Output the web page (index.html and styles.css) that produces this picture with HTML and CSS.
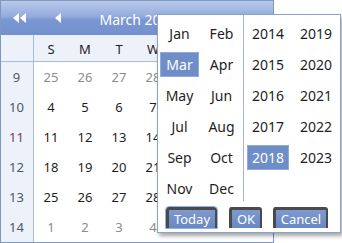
FILE: index.html
```html
<!DOCTYPE html>
<html lang="en">
<head>
  <meta charset="UTF-8">
  <title>Calendar</title>
  <link rel="stylesheet" href="styles.css">
</head>
<body>
  <div class="calendar">
    <div class="cal-header">
      <span class="nav nav-fast">
        <svg width="13" height="10" viewBox="0 0 13 10"><path d="M6 0L0 5l6 5z M13 0L7 5l6 5z" fill="#fff"/></svg>
      </span>
      <span class="nav nav-prev">
        <svg width="6" height="10" viewBox="0 0 6 10"><path d="M6 0L0 5l6 5z" fill="#fff"/></svg>
      </span>
      <span class="cal-title">March 2018</span>
    </div>
    <div class="cal-grid" id="cal-grid"></div>

    <div class="picker">
      <div class="picker-body">
        <div class="months" id="months"></div>
        <div class="years" id="years"></div>
      </div>
      <div class="picker-buttons">
        <button class="btn btn-focus">Today</button>
        <button class="btn btn-ok">OK</button>
        <button class="btn btn-cancel">Cancel</button>
      </div>
    </div>
  </div>

  <script>
    document.addEventListener('DOMContentLoaded', function() {
      const grid = document.getElementById('cal-grid');
      const days = ['S', 'M', 'T', 'W', 'T', 'F', 'S'];
      const weeks = [
        { num: 9, days: [25, 26, 27, 28, 1, 2, 3], otherUntil: 4 },
        { num: 10, days: [4, 5, 6, 7, 8, 9, 10] },
        { num: 11, days: [11, 12, 13, 14, 15, 16, 17], current: true },
        { num: 12, days: [18, 19, 20, 21, 22, 23, 24] },
        { num: 13, days: [25, 26, 27, 28, 29, 30, 31] },
        { num: 14, days: [1, 2, 3, 4, 5, 6, 7], allOther: true }
      ];

      // Заголовок з днями тижня
      const corner = document.createElement('div');
      corner.className = 'cell week head';
      grid.appendChild(corner);
      days.forEach(d => {
        const cell = document.createElement('div');
        cell.className = 'cell head';
        cell.textContent = d;
        grid.appendChild(cell);
      });

      weeks.forEach(w => {
        const wk = document.createElement('div');
        wk.className = 'cell week' + (w.current ? ' week-current' : '');
        wk.textContent = w.num;
        grid.appendChild(wk);
        w.days.forEach((d, i) => {
          const cell = document.createElement('div');
          const other = w.allOther || (w.otherUntil && i < w.otherUntil);
          cell.className = 'cell day' + (other ? ' other' : '');
          cell.textContent = d;
          grid.appendChild(cell);
        });
      });

      const months = ['Jan', 'Feb', 'Mar', 'Apr', 'May', 'Jun', 'Jul', 'Aug', 'Sep', 'Oct', 'Nov', 'Dec'];
      const monthsDiv = document.getElementById('months');
      months.forEach((m, i) => {
        const el = document.createElement('div');
        el.className = 'pick' + (i === 2 ? ' selected' : '');
        el.textContent = m;
        monthsDiv.appendChild(el);
      });

      // Роки йдуть по стовпцях
      const years = [2014, 2019, 2015, 2020, 2016, 2021, 2017, 2022, 2018, 2023];
      const yearsDiv = document.getElementById('years');
      years.forEach(y => {
        const el = document.createElement('div');
        el.className = 'pick' + (y === 2018 ? ' selected' : '');
        el.textContent = y;
        yearsDiv.appendChild(el);
      });
    });
  </script>
</body>
</html>
```

FILE: styles.css
```css
body {
  margin: 0;
  background: #fff;
  font-family: 'Noto Sans', 'Open Sans', sans-serif;
}

.calendar {
  position: relative;
  width: 274px;
  height: 243px;
  box-sizing: border-box;
  border: 1px solid #7f98bd;
  background: #fff;
}

.cal-header {
  height: 34px;
  display: flex;
  align-items: center;
  background: linear-gradient(to bottom, #b8c9ea 0%, #94acdd 45%, #7b97d2 55%, #7491cf 100%);
  color: #fff;
}

.nav {
  display: flex;
  align-items: center;
}

.nav-fast {
  margin-left: 12px;
}

.nav-prev {
  margin-left: 29px;
}

.cal-title {
  flex: 1;
  text-align: center;
  font-size: 14px;
  margin-left: -58px;
  margin-top: 2px;
}

.cal-grid {
  display: grid;
  grid-template-columns: 33px repeat(7, 34px);
  grid-template-rows: 27px repeat(6, 30px);
}

.cell {
  display: flex;
  align-items: center;
  justify-content: center;
  font-size: 13px;
  color: #1e1e1e;
}

.cell.head {
  background: #edf2fa;
  border-bottom: 1px solid #a9bcd6;
  padding-top: 2px;
  box-sizing: border-box;
}

.cell.week {
  background: #edf2fa;
  border-right: 1px solid #a9bcd6;
  color: #4f5866;
  padding-right: 1px;
}

.cell.week-current {
  color: #7a3a5c;
}

.cell.other {
  color: #8c8c8c;
}

.picker {
  position: absolute;
  left: 156px;
  top: 13px;
  width: 184px;
  height: 219px;
  box-sizing: border-box;
  border: 1px solid #8ca4c6;
  background: #fff;
  box-shadow: 2px 3px 4px rgba(0, 0, 0, 0.35);
}

.picker-body {
  display: flex;
}

.months {
  width: 86px;
  box-sizing: border-box;
  padding: 6px 0 0 2px;
  border-right: 1px solid #a3b7d3;
  display: grid;
  grid-template-columns: 39px 39px;
  grid-auto-rows: 25px;
  column-gap: 3px;
  row-gap: 6px;
}

.years {
  padding: 6px 0 0 3px;
  display: grid;
  grid-template-columns: 42px 42px;
  grid-auto-rows: 25px;
  column-gap: 6px;
  row-gap: 6px;
}

.pick {
  display: flex;
  align-items: center;
  justify-content: center;
  font-size: 14px;
  line-height: 18px;
  color: #1e1e1e;
  box-sizing: border-box;
}

.pick.selected {
  background: #6f8dc7;
  border: 1px solid #90aadb;
  color: #fff;
}

.picker-buttons {
  display: flex;
  padding: 6px 0 0 8px;
}

.btn {
  height: 21px;
  box-sizing: border-box;
  padding: 0;
  font-family: 'Noto Sans', 'Open Sans', sans-serif;
  font-size: 13px;
  color: #fff;
  background: linear-gradient(to bottom, #7e99cf, #6987c2);
  border-top: 3px solid #4a4a4a;
  border-left: 3px solid #4a4a4a;
  border-right: 2px solid #4a4a4a;
  border-bottom: 0;
  border-radius: 3px 3px 0 0;
  line-height: 16px;
}

.btn-focus {
  width: 51px;
  outline: 1px solid #8fb0ec;
}

.btn-ok {
  width: 33px;
  margin-left: 12px;
}

.btn-cancel {
  width: 55px;
  margin-left: 11px;
}
```
